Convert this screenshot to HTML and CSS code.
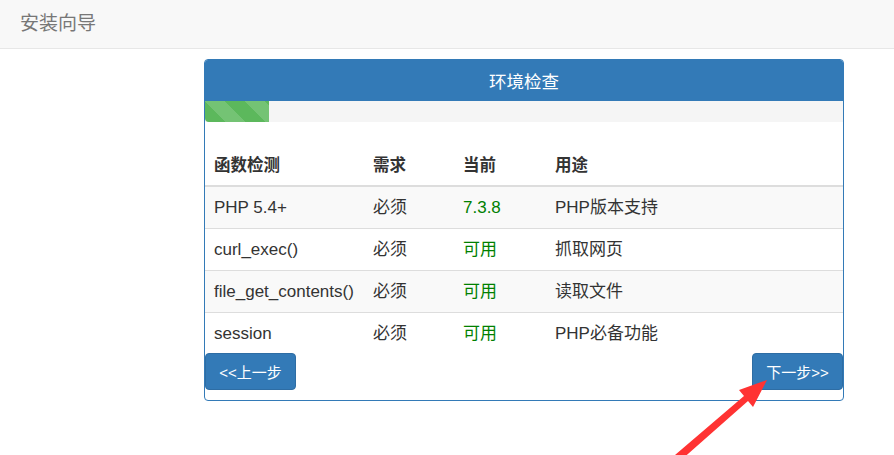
FILE: index.html
```html
<!DOCTYPE html>
<html lang="zh-CN">
<head>
    <meta charset="UTF-8">
    <title>安装向导</title>
    <link rel="stylesheet" href="styles.css">
</head>
<body>
    <div class="navbar">安装向导</div>

    <div class="panel">
        <div class="panel-heading">环境检查</div>
        <div class="progress">
            <div class="progress-bar" style="width: 10%"></div>
        </div>

        <table class="check-table">
            <thead>
                <tr>
                    <th class="col-name">函数检测</th>
                    <th class="col-need">需求</th>
                    <th class="col-cur">当前</th>
                    <th>用途</th>
                </tr>
            </thead>
            <tbody>
                <tr>
                    <td>PHP 5.4+</td>
                    <td>必须</td>
                    <td class="ok">7.3.8</td>
                    <td>PHP版本支持</td>
                </tr>
                <tr>
                    <td>curl_exec()</td>
                    <td>必须</td>
                    <td class="ok">可用</td>
                    <td>抓取网页</td>
                </tr>
                <tr>
                    <td>file_get_contents()</td>
                    <td>必须</td>
                    <td class="ok">可用</td>
                    <td>读取文件</td>
                </tr>
                <tr>
                    <td>session</td>
                    <td>必须</td>
                    <td class="ok">可用</td>
                    <td>PHP必备功能</td>
                </tr>
            </tbody>
        </table>

        <div class="actions">
            <button class="btn">&lt;&lt;上一步</button>
            <button class="btn">下一步&gt;&gt;</button>
        </div>
    </div>

    <!-- annotation arrow -->
    <svg class="arrow" width="894" height="455" viewBox="0 0 894 455">
        <polygon points="767,380 753,407 748,401 680,461 675,455 744,396 739,390" fill="#ff3333"/>
    </svg>
</body>
</html>
```

FILE: styles.css
```css
* {
    margin: 0;
    padding: 0;
    box-sizing: border-box;
}

body {
    font-family: "Liberation Sans", "Noto Sans CJK SC", sans-serif;
    color: #333;
    background: #fff;
    position: relative;
    width: 894px;
    height: 455px;
    overflow: hidden;
}

.navbar {
    height: 49px;
    background: #f8f8f8;
    border-bottom: 1px solid #e7e7e7;
    padding-left: 20px;
    padding-bottom: 6px;
    display: flex;
    align-items: center;
    font-size: 19px;
    color: #777;
}

.panel {
    width: 640px;
    margin: 10px 0 0 204px;
    border: 1px solid #337ab7;
    border-radius: 4px;
    padding-bottom: 10px;
}

.panel-heading {
    height: 41px;
    background: #337ab7;
    color: #fff;
    font-size: 17.5px;
    display: flex;
    align-items: center;
    justify-content: center;
    border-radius: 3px 3px 0 0;
}

.progress {
    height: 21px;
    background: #f5f5f5;
}

.progress-bar {
    height: 100%;
    background-color: #5cb85c;
    background-image: linear-gradient(45deg, rgba(255,255,255,.15) 25%, transparent 25%, transparent 50%, rgba(255,255,255,.15) 50%, rgba(255,255,255,.15) 75%, transparent 75%, transparent);
    background-size: 40px 40px;
    border-radius: 0 0 0 4px;
}

.check-table {
    width: 100%;
    border-collapse: collapse;
    margin-top: 23px;
    font-size: 17px;
}

.check-table th {
    text-align: left;
    font-weight: bold;
    font-size: 16.5px;
    padding: 8px 8px 8px 9px;
    line-height: 24px;
    border-bottom: 2px solid #ddd;
}

.col-name { width: 159px; }
.col-need { width: 90px; }
.col-cur { width: 92px; }

.check-table td {
    padding: 10px 8px 10px 9px;
    line-height: 21px;
    border-top: 1px solid #ddd;
}

.check-table tbody tr:first-child td {
    border-top: none;
}

.check-table tbody tr:nth-child(odd) {
    background: #f9f9f9;
}

.check-table td.ok {
    color: #008000;
}

.actions {
    display: flex;
    justify-content: space-between;
    margin-top: -1px;
}

.btn {
    width: 91px;
    height: 37px;
    background: #337ab7;
    border: 1px solid #2e6da4;
    border-radius: 4px;
    color: #fff;
    font-family: "Liberation Sans", "Noto Sans CJK SC", sans-serif;
    font-size: 15px;
    cursor: pointer;
}

.arrow {
    position: absolute;
    left: 0;
    top: 0;
    pointer-events: none;
}
```
